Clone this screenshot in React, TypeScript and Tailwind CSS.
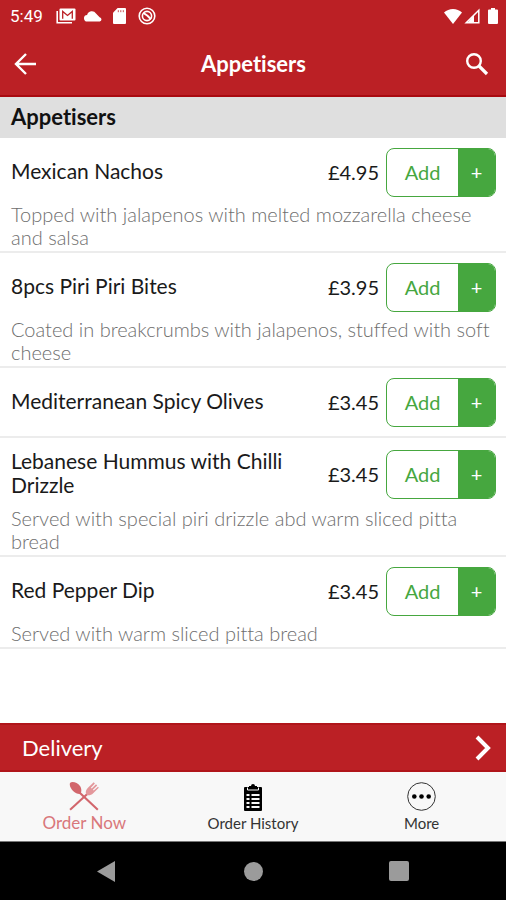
import React from "react";

type Dish = { name: string; price: string; description?: string };

const dishes: Dish[] = [
  {
    name: "Mexican Nachos",
    price: "£4.95",
    description: "Topped with jalapenos with melted mozzarella cheese and salsa",
  },
  {
    name: "8pcs Piri Piri Bites",
    price: "£3.95",
    description: "Coated in breakcrumbs with jalapenos, stuffed with soft cheese",
  },
  { name: "Mediterranean Spicy Olives", price: "£3.45" },
  {
    name: "Lebanese Hummus with Chilli Drizzle",
    price: "£3.45",
    description: "Served with special piri drizzle abd warm sliced pitta bread",
  },
  {
    name: "Red Pepper Dip",
    price: "£3.45",
    description: "Served with warm sliced pitta bread",
  },
];

function StatusBar() {
  return (
    <div className="flex h-8 items-center justify-between pr-2 pl-[10px]">
      <div className="flex items-center">
        <span className="w-[46px] font-[Roboto,sans-serif] text-[17px] leading-5">5:49</span>
        <svg className="h-4 w-5" viewBox="0 0 20 16" fill="none" stroke="currentColor">
          <path d="M1.2 3v11.8H16" strokeWidth="1.6" />
          <rect x="3.5" y="0.5" width="16" height="12" rx="1" fill="currentColor" stroke="none" />
          <path d="M6.7 10.8V3.4l4.8 4 4.8-4v7.4" stroke="#bb2025" strokeWidth="1.3" />
        </svg>
        <svg className="ml-2 h-3 w-[18px]" viewBox="0 0 18 12" fill="currentColor">
          <path d="M3.500 11.500a3.300 3.300 0 0 1-.4-6.600A4.900 4.900 0 0 1 12 3.500l3.600 3.700a2.200 2.200 0 0 1 .2 4.300z" />
        </svg>
        <svg className="ml-[11px] h-4 w-[13px]" viewBox="0 0 13 16" fill="currentColor">
          <path d="M4.6 0H12a1 1 0 0 1 1 1v14a1 1 0 0 1-1 1H1a1 1 0 0 1-1-1V4.8z" />
          <path d="M5.3 2.2v2M7.8 2.2v2M10.3 2.2v2" stroke="#bb2025" strokeWidth="0.8" />
        </svg>
        <svg className="ml-3 h-[18px] w-[18px]" viewBox="0 0 18 18" fill="none" stroke="currentColor">
          <circle cx="9" cy="9" r="7.800" strokeWidth="1.600" />
          <circle cx="9" cy="9" r="4.600" strokeWidth="1.600" />
          <path d="M5.500 6l4 2.800 3.500 3.500" strokeWidth="2" />
        </svg>
      </div>
      <div className="flex items-center">
        <svg className="h-[15px] w-[18px]" viewBox="0 0 18 15" fill="currentColor">
          <path d="M9 15L0 3.6C2.600 1.300 5.600 0 9 0s6.400 1.300 9 3.600z" />
        </svg>
        <svg className="ml-[2px] h-4 w-4" viewBox="0 0 16 16">
          <path d="M14.800 2.200v12.600H2.200z" fill="none" stroke="currentColor" strokeWidth="1.500" />
          <path d="M10 7v7H4z" fill="currentColor" />
        </svg>
        <svg className="ml-2 h-4 w-[10px]" viewBox="0 0 10 16" fill="currentColor">
          <path d="M3 0h4v1.600h2a1 1 0 0 1 1 1V15a1 1 0 0 1-1 1H1a1 1 0 0 1-1-1V2.600a1 1 0 0 1 1-1h2z" />
        </svg>
      </div>
    </div>
  );
}

function Header() {
  return (
    <header className="border-b-2 border-[#a90a10] bg-[#bb2025] text-white">
      <StatusBar />
      <div className="flex h-[63px] items-center justify-between pr-[17px] pl-[14px]">
        <button type="button" aria-label="Back" className="w-7">
          <svg className="h-6 w-6" viewBox="0 0 24 24" fill="none" stroke="currentColor" strokeWidth="2.400">
            <path d="M22 12H2M12 2L2 12l10 10" />
          </svg>
        </button>
        <h1 className="text-[22px] leading-6 font-bold">Appetisers</h1>
        <button type="button" aria-label="Search" className="w-6">
          <svg className="h-6 w-6" viewBox="0 0 24 24" fill="none" stroke="currentColor">
            <circle cx="9" cy="9" r="6.800" strokeWidth="2.400" />
            <path d="M14 14l8 8" strokeWidth="3.200" />
          </svg>
        </button>
      </div>
    </header>
  );
}

function DishRow({ dish }: { dish: Dish }) {
  return (
    <li className="border-b-2 border-[#ececec] pt-[10px] pr-[10px] pb-[2px] pl-[11px]">
      <div className="flex items-center">
        <h3 className="flex-1 pt-px pb-1 text-[21px] leading-6">{dish.name}</h3>
        <span className="pb-[2px] text-[20px] leading-6">{dish.price}</span>
        <div className="ml-[7px] flex h-[49px] w-[110px] overflow-hidden rounded-lg border border-[#46a73f]">
          <button type="button" className="flex-1 pb-[2px] text-[20px] text-[#46a73f]">
            Add
          </button>
          <button
            type="button"
            aria-label={`Choose quantity of ${dish.name}`}
            className="w-[37px] bg-[#46a73f] pb-[2px] text-[20px] text-white"
          >
            +
          </button>
        </div>
      </div>
      {dish.description ? (
        <p className="mt-[6px] text-[20px] leading-[23px] font-light text-[#6e6e6e]">{dish.description}</p>
      ) : (
        <div className="h-[7px]" />
      )}
    </li>
  );
}

function TabBar() {
  return (
    <nav className="grid h-[69px] grid-cols-3 bg-[#f8f8f8] text-[#333333]">
      <a href="#order" className="flex flex-col items-center pt-[9px] text-[#d9777b]">
        <svg className="h-[30px] w-[30px]" viewBox="0 0 30 30" fill="currentColor">
          <path
            d="M1 2C3-.2 8.500 1.500 11 5c1.500 2.200 1.600 4.600 1 6.600L29.500 28l-1.400 1.600L10.500 13C6 13-.5 6.500 1 2z"
            fill="#d2666c"
          />
          <path d="M1.800 29.600L.4 28.100 17.300 12.500l1.400 1.500z" fill="#d2666c" />
          <path d="M16.800 12.300c-.2-2.500.8-4.300 2.400-5.800l5.500-5.300 1.200 1.200-4 4.400.8.700 4.300-4.200 1.200 1.200-4.300 4.300.8.700L29 5.700l.8 1-5.600 5.500c-1.700 1.700-3.600 2.400-5.900 2z" fill="#e3979b" />
        </svg>
        <span className="text-[17px] leading-6">Order Now</span>
      </a>
      <a href="#history" className="flex flex-col items-center pt-[11px]">
        <svg className="h-7 w-[18px]" viewBox="0 0 18 28" fill="#000000">
          <path d="M1 4h4V3h2a2 2 0 0 1 4 0h2v1h4a1 1 0 0 1 1 1v22a1 1 0 0 1-1 1H1a1 1 0 0 1-1-1V5a1 1 0 0 1 1-1z" />
          <path d="M3.500 4.500v2.500h11V4.500" fill="none" stroke="#f8f8f8" strokeWidth="1" />
          <path d="M2.500 12h3M7.500 12h8M2.500 16h3M7.500 16h8M2.500 20h3M7.500 20h8M2.500 24h3M7.500 24h8" stroke="#f8f8f8" strokeWidth="1.800" />
        </svg>
        <span className="text-[15px] leading-6">Order History</span>
      </a>
      <a href="#more" className="flex flex-col items-center pt-[10px]">
        <svg className="h-[29px] w-[29px]" viewBox="0 0 29 29">
          <circle cx="14.500" cy="14.500" r="13.800" fill="none" stroke="#333333" strokeWidth="1" />
          <circle cx="7.300" cy="14.500" r="2.300" fill="#000000" />
          <circle cx="14.500" cy="14.500" r="2.300" fill="#000000" />
          <circle cx="21.700" cy="14.500" r="2.300" fill="#000000" />
        </svg>
        <span className="text-[15px] leading-6">More</span>
      </a>
    </nav>
  );
}

function SystemNav() {
  return (
    <div className="grid h-[59px] grid-cols-[1fr_80px_1fr] items-center border-t border-[#777777] bg-black text-[#9b9b9b]">
      <button type="button" aria-label="System back" className="ml-[97px] w-[18px]">
        <svg className="h-[21px] w-[18px]" viewBox="0 0 18 21" fill="currentColor">
          <path d="M18 0v21L0 10.500z" />
        </svg>
      </button>
      <button type="button" aria-label="Home" className="mx-auto h-[19px] w-[19px] rounded-full bg-current" />
      <button type="button" aria-label="Recent apps" className="ml-24 h-5 w-5 rounded-xs bg-current" />
    </div>
  );
}

export default function App() {
  return (
    <div className="flex min-h-screen flex-col bg-white font-[Lato,sans-serif] text-[#1a1a1a] [font-variant-ligatures:none]">
      <Header />
      <main className="flex-1">
        <h2 className="bg-[#dfdfdf] pt-[8px] pr-[10px] pb-[9px] pl-[11px] text-[22px] leading-6 font-bold text-[#111111]">
          Appetisers
        </h2>
        <ul>
          {dishes.map((dish) => (
            <DishRow key={dish.name} dish={dish} />
          ))}
        </ul>
      </main>
      <button
        type="button"
        className="flex h-[49px] items-center justify-between border-y-2 border-[#b0151a] bg-[#bb2025] pr-[15px] pl-[22px] text-white"
      >
        <span className="text-[22px] leading-6">Delivery</span>
        <svg className="h-[26px] w-4" viewBox="0 0 16 26" fill="none" stroke="currentColor" strokeWidth="4">
          <path d="M2 2l11 11L2 24" />
        </svg>
      </button>
      <TabBar />
      <SystemNav />
    </div>
  );
}
